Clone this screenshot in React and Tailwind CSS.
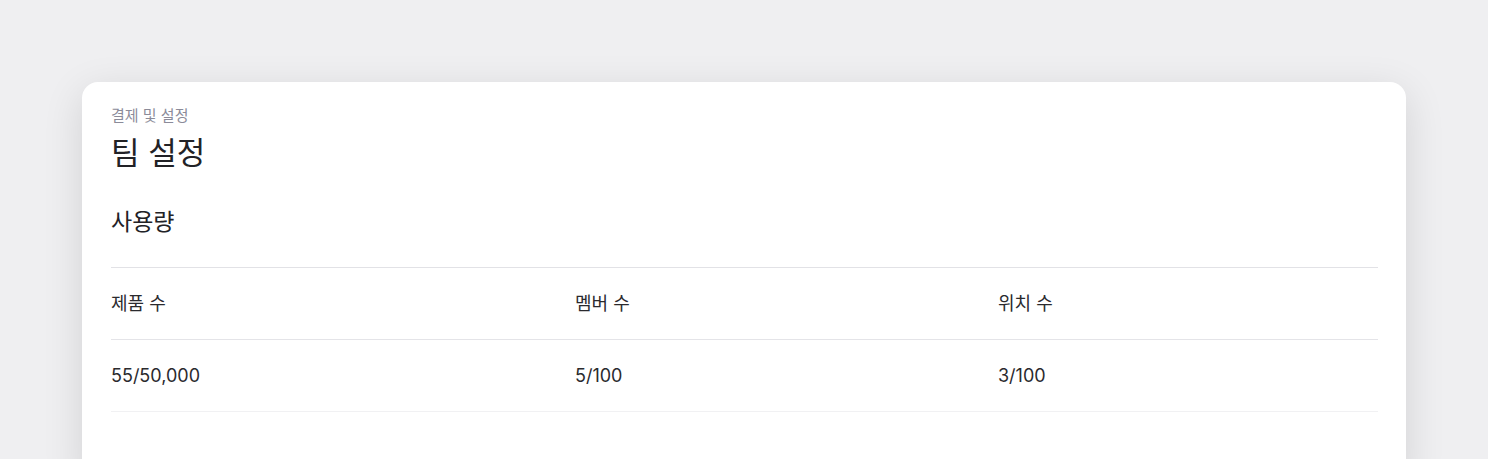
const usage = [
  { label: '제품 수', value: '55/50,000', width: 'w-[464px]' },
  { label: '멤버 수', value: '5/100', width: 'w-[423px]' },
  { label: '위치 수', value: '3/100', width: 'flex-1' },
];

export default function App() {
  return (
    <div
      className="h-[459px] overflow-hidden bg-[#efeff1] px-[82px] pt-[82px]"
      style={{ fontFamily: 'Inter, "Noto Sans CJK KR", sans-serif' }}
    >
      <div className="h-[400px] rounded-2xl bg-white pt-[24px] pl-[29px] pr-[28px] shadow-[0_10px_40px_rgba(0,0,0,0.12)]">
        {/* Header */}
        <div className="text-[15px] leading-[20px] text-[#8b8b99]">결제 및 설정</div>
        <h1 className="mt-[7px] text-[31px] font-normal leading-[40px] text-[#222226]">팀 설정</h1>

        {/* Usage */}
        <h2 className="mt-[33px] text-[23px] font-normal leading-[32px] text-[#222226]">사용량</h2>

        <div className="mt-[29px] border-t border-[#e2e2e6]">
          <div className="flex h-[72px] items-center border-b border-[#e4e4e8] text-[18px] text-[#2a2a2e]">
            {usage.map((u) => (
              <div key={u.label} className={u.width}>{u.label}</div>
            ))}
          </div>
          <div className="flex h-[72px] items-center border-b border-[#f1f1f3] text-[18px] text-[#2a2a2e]">
            {usage.map((u) => (
              <div key={u.label} className={u.width}>{u.value}</div>
            ))}
          </div>
        </div>
      </div>
    </div>
  );
}
